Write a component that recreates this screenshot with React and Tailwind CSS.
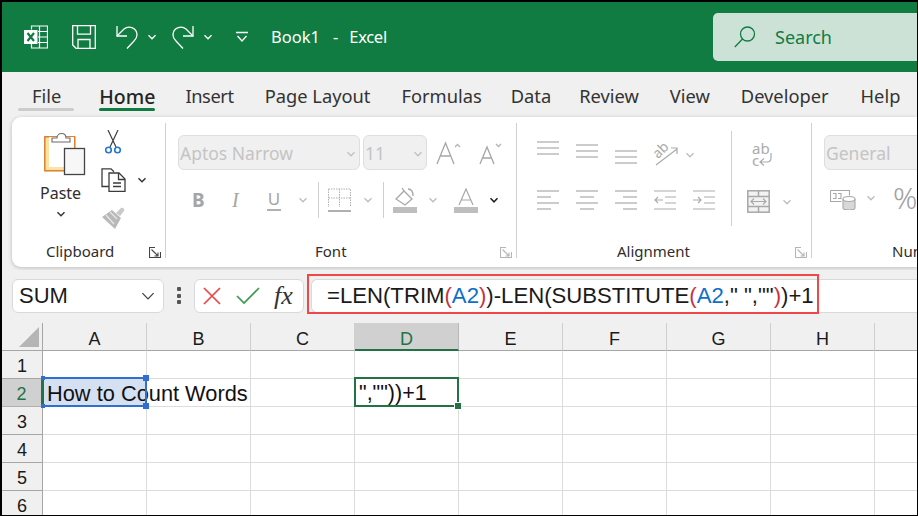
const UI = { fontFamily: '"Noto Sans", sans-serif' };

function Chev({ color = "#444", size = 10, sw = 1.3, className = "" }) {
  return (
    <svg width={size} height={size} viewBox="0 0 10 10" className={"shrink-0 " + className}>
      <path d="M1.5 3.2 5 6.8 8.5 3.2" fill="none" stroke={color} strokeWidth={sw} />
    </svg>
  );
}

function ExcelLogo() {
  return (
    <svg width="24" height="24" viewBox="0 0 24 24" fill="none">
      <path d="M7.5 4.5V1h16v22h-16v-4" stroke="#fff" strokeWidth="1.2" />
      <path d="M14 6.5h9.5M14 12h9.5M14 17.5h9.5M15.5 1v22" stroke="#fff" strokeWidth="1.2" />
      <rect x="0" y="5" width="13.5" height="14" fill="#fff" />
      <path d="M3.5 8 10 16M10 8l-6.500 8" stroke="#107c41" strokeWidth="2.200" />
    </svg>
  );
}
function SaveIcon() {
  return (
    <svg width="24" height="24" viewBox="0 0 24 24" fill="none" stroke="#fff" strokeWidth="1.300">
      <path d="M.7.7h22.600v22.600H4L.7 20z" />
      <path d="M5.500.7v8.500h13V.7M6 23.300V14.500h12v8.800" />
    </svg>
  );
}
function UndoIcon() {
  return (
    <svg width="23" height="24" viewBox="0 0 23 24" fill="none" stroke="#fff" strokeWidth="1.300">
      <path d="M1 1v10h10" />
      <path d="M1 11 8 4c5-4 13-1 13 6 0 3-1 4-3 6l-7 7.500" />
    </svg>
  );
}
function RedoIcon() {
  return (
    <svg width="23" height="24" viewBox="0 0 23 24" fill="none" stroke="#fff" strokeWidth="1.300">
      <path d="M22 1v10H12" />
      <path d="M22 11 15 4C10 0 2 3 2 10c0 3 1 4 3 6l7 7.500" />
    </svg>
  );
}
function CustomizeIcon() {
  return (
    <svg width="12" height="12" viewBox="0 0 12 12" fill="none" stroke="#fff" strokeWidth="1.300">
      <path d="M0 1.500h12M1.500 5 6 10 10.500 5" />
    </svg>
  );
}
function SearchIcon() {
  return (
    <svg width="22" height="22" viewBox="0 0 22 22" fill="none" stroke="#107c41" strokeWidth="1.300">
      <circle cx="13.500" cy="8" r="7" />
      <path d="M8.500 13 .8 21" />
    </svg>
  );
}
function TitleBar() {
  return (
    <div className="h-[70px] shrink-0 bg-[#107c41] flex items-center pl-[22px] text-white">
      <ExcelLogo />
      <div className="ml-[24px]"><SaveIcon /></div>
      <div className="ml-[20px]"><UndoIcon /></div>
      <Chev color="#fff" size={10} className="ml-[8px]" />
      <div className="ml-[14px]"><RedoIcon /></div>
      <Chev color="#fff" size={10} className="ml-[9px]" />
      <div className="ml-[23px]"><CustomizeIcon /></div>
      <div className="ml-[23px] text-[16.500px] whitespace-nowrap leading-none flex">
        <span>Book1</span>
        <span className="ml-[13px]">-</span>
        <span className="ml-[11px] tracking-[-0.3px]">Excel</span>
      </div>
      <div className="ml-auto w-[204px] h-[48px] bg-[#cde2d7] rounded-l-[5px] flex items-center pl-[21px] text-[#107c41] text-[18px]">
        <SearchIcon />
        <span className="ml-[19px]">Search</span>
      </div>
    </div>
  );
}

function Tab({ children, active, hover, className = "" }) {
  return (
    <div className={"relative leading-none whitespace-nowrap " + (active ? "font-medium text-[#262626] text-[19.500px] " : "text-[#333] text-[18.300px] ") + className}>
      {children}
      {active && <div className="absolute left-0 right-0 top-[21px] h-[3px] rounded bg-[#107c41]" />}
      {hover && <div className="absolute left-[-14px] right-[-13px] top-[21px] h-[3px] rounded bg-[#cccccc]" />}
    </div>
  );
}
function Tabs() {
  return (
    <div className="h-[45px] shrink-0 bg-[#f0f0f0] flex items-start pt-[15px] pl-[30px]">
      <Tab hover>File</Tab>
      <Tab active className="ml-[38px]">Home</Tab>
      <Tab className="ml-[30px] tracking-[-0.4px]">Insert</Tab>
      <Tab className="ml-[31px]">Page Layout</Tab>
      <Tab className="ml-[31px]">Formulas</Tab>
      <Tab className="ml-[29px]">Data</Tab>
      <Tab className="ml-[28px]">Review</Tab>
      <Tab className="ml-[31px]">View</Tab>
      <Tab className="ml-[31px]">Developer</Tab>
      <Tab className="ml-[32px]">Help</Tab>
    </div>
  );
}

function Launcher({ dim }) {
  const c = dim ? "#b5b5b5" : "#444";
  return (
    <svg width="12" height="11" viewBox="0 0 12 11" fill="none" stroke={c} strokeWidth="1.100">
      <path d="M11.500 5V10.500H.5V.5H6" />
      <path d="M2.500 2.500 9 9M9 5.500V9H5.500" />
    </svg>
  );
}
function GroupFooter({ label, left, launchLeft, dim }) {
  return (
    <div className="h-[20px] pt-[6px] flex items-center relative text-[15px] text-[#2e2e2e] leading-none">
      <span style={{ marginLeft: left }}>{label}</span>
      {launchLeft !== undefined && <span className="flex" style={{ position: "absolute", left: launchLeft, top: 9 }}><Launcher dim={dim} /></span>}
    </div>
  );
}

function PasteIcon() {
  return (
    <svg width="42" height="46" viewBox="0 0 42 46" fill="none">
      <rect x=".8" y="6.800" width="30" height="34" fill="#fbe3a4" stroke="#d8781f" strokeWidth="1.400" />
      <rect x="5" y="7" width="25" height="30" fill="#fff" />
      <path d="M8 12V8h5c0-6 9-6 9 0h4v4z" fill="#fff" stroke="#6b6b6b" strokeWidth="1.100" />
      <rect x="20.500" y="18.500" width="20" height="26" fill="#f7f7f7" stroke="#444" strokeWidth="1.300" />
    </svg>
  );
}
function ScissorsIcon() {
  return (
    <svg width="16" height="24" viewBox="0 0 16 24" fill="none">
      <path d="M3 0 11 17M13 0 5 17" stroke="#3f3f3f" strokeWidth="1.200" />
      <circle cx="3.500" cy="20" r="2.800" stroke="#1f78d1" strokeWidth="1.600" />
      <circle cx="12.500" cy="20" r="2.800" stroke="#1f78d1" strokeWidth="1.600" />
    </svg>
  );
}
function CopyIcon() {
  return (
    <svg width="25" height="24" viewBox="0 0 25 24" fill="none" stroke="#3c3c3c" strokeWidth="1.300">
      <path d="M8 18.500H1V.8h9l3 3" />
      <path d="M8 5h10l6 6v12.300H8z" fill="#fff" />
      <path d="M17.500 5v6.500H24M12 15h8M12 18.500h8" />
    </svg>
  );
}
function BrushIcon() {
  return (
    <svg width="25" height="23" viewBox="0 0 25 23">
      <path d="M1 10 11 3l9 8-6 11z" fill="#b9b9b9" />
      <path d="M5 8l8 9M9 5l7 7" stroke="#e6e6e6" strokeWidth="1.200" fill="none" />
      <path d="M15 6 20 1c2-1 4 1 3 3l-4 5z" fill="#c9c9c9" />
    </svg>
  );
}
function Clipboard() {
  return (
    <div className="w-[154px] shrink-0 border-r border-[#d0d0d0] h-[135px] flex flex-col">
      <div className="flex-1 flex pt-[7px]">
        <div className="w-[75px] pl-[32px] flex flex-col">
          <PasteIcon />
          <div className="mt-[7px] -ml-[4px] text-[16px] leading-[20px] text-[#2e2e2e]">Paste</div>
          <Chev color="#333" size={10} sw={1.400} className="mt-[6px] ml-[12px]" />
        </div>
        <div className="flex flex-col items-start pl-[14px]">
          <div className="ml-[4px]"><ScissorsIcon /></div>
          <div className="mt-[14px] flex items-center">
            <CopyIcon />
            <Chev color="#333" size={10} sw={1.400} className="ml-[11px]" />
          </div>
          <div className="mt-[15px]"><BrushIcon /></div>
        </div>
      </div>
      <GroupFooter label="Clipboard" left={34} launchLeft={137} />
    </div>
  );
}

function Combo({ w, label }) {
  return (
    <div className={"h-[35px] rounded-[6px] bg-[#f0f0f0] border border-[#dedede] flex items-center pl-[1px] pt-[2px] text-[17.500px] text-[#c4c4c4] leading-none overflow-hidden " + w}>
      <span>{label}</span>
      <Chev color="#c0c0c0" size={10} className="ml-auto mr-[3px]" />
    </div>
  );
}
function GrowA({ up }) {
  return (
    <svg width="26" height="26" viewBox="0 0 26 26" fill="none" stroke="#a6a6a6" strokeWidth="1.300">
      {up ? (
        <>
          <path d="M1 24 9.500 3 18 24M4.500 16h10" />
          <path d="M19 7l2.500-2.500L24 7" stroke="#b4b4b4" />
        </>
      ) : (
        <>
          <path d="M2 24 9 7l7 17M5 18h8" />
          <path d="M18 4l2.500 2.500L23 4" stroke="#b4b4b4" />
        </>
      )}
    </svg>
  );
}
function BordersIcon() {
  return (
    <svg width="23" height="24" viewBox="0 0 23 24" fill="none">
      <path d="M.5 1h22v18M.5 1v18M11.500 1v18M.5 10h22" stroke="#b0b0b0" strokeWidth="1" strokeDasharray="1.500 1" />
      <path d="M0 23h23" stroke="#a8a8a8" strokeWidth="1.800" />
    </svg>
  );
}
function FillIcon() {
  return (
    <svg width="24" height="25" viewBox="0 0 24 25" fill="none">
      <path d="M3 11 11 3l8 8-7 6z" stroke="#a8a8a8" strokeWidth="1.300" fill="#fff" />
      <path d="M11 3 9 0M15 1c4 0 5 3 5 7" stroke="#a8a8a8" strokeWidth="1.300" />
      <rect x="0" y="19" width="24" height="6" fill="#bebebe" />
    </svg>
  );
}
function FontColorIcon() {
  return (
    <svg width="24" height="25" viewBox="0 0 24 25" fill="none">
      <path d="M5 17 12 1l7 16M7.500 12h9" stroke="#a8a8a8" strokeWidth="1.200" />
      <rect x="0" y="19" width="24" height="6" fill="#bebebe" />
    </svg>
  );
}
function Font() {
  return (
    <div className="w-[351px] shrink-0 border-r border-[#d0d0d0] h-[135px] flex flex-col">
      <div className="flex-1 flex flex-col pl-[12px] pt-[12px]">
        <div className="flex items-center">
          <Combo w="w-[182px]" label="Aptos Narrow" />
          <div className="ml-[3px]"><Combo w="w-[64px]" label="11" /></div>
          <div className="ml-[9px]"><GrowA up /></div>
          <div className="ml-[16px]"><GrowA /></div>
        </div>
        <div className="flex items-center mt-[12px] h-[36px] text-[#a5a5a5]">
          <span className="w-[12px] ml-[14px] text-[19px] font-bold leading-none">B</span>
          <span className="ml-[28px] w-[8px] text-[20px] italic leading-none" style={{ fontFamily: '"Liberation Serif", serif' }}>I</span>
          <span className="ml-[27px] w-[14px] text-[17px] leading-none border-b-2 border-[#b0b0b0] text-center pb-[2px]">U</span>
          <Chev color="#bdbdbd" size={10} className="ml-[17px]" />
          <div className="w-px h-[36px] bg-[#cfcfcf] ml-[10px]" />
          <div className="ml-[9px]"><BordersIcon /></div>
          <Chev color="#bdbdbd" size={10} className="ml-[12px]" />
          <div className="w-px h-[36px] bg-[#cfcfcf] ml-[10px]" />
          <div className="ml-[9px]"><FillIcon /></div>
          <Chev color="#bdbdbd" size={10} className="ml-[11px]" />
          <div className="ml-[16px]"><FontColorIcon /></div>
          <Chev color="#222" size={10} sw={1.500} className="ml-[11px]" />
        </div>
      </div>
      <GroupFooter label="Font" left={149} launchLeft={334} dim />
    </div>
  );
}

function Lines({ align = "left", rows = 4 }) {
  const ys = rows === 3 ? [1, 7, 13] : [1, 7, 13, 19];
  const widths = [22, 14, 22, 14];
  const h = rows === 3 ? 14 : 20;
  return (
    <svg width="22" height={h} viewBox={`0 0 22 ${h}`} stroke="#ababab" strokeWidth="1.200">
      {ys.map((y, i) => {
        const w = rows === 3 ? 22 : widths[i];
        const x = align === "left" ? 0 : align === "right" ? 22 - w : (22 - w) / 2;
        return <line key={y} x1={x} x2={x + w} y1={y} y2={y} />;
      })}
    </svg>
  );
}
function Indent({ dir }) {
  return (
    <svg width="22" height="20" viewBox="0 0 22 20" fill="none" stroke="#ababab" strokeWidth="1.200">
      <path d="M0 1h22M0 19h22M11 7h11M11 13h11" />
      <path d={dir === "out" ? "M9 10H1M4 7l-3 3 3 3" : "M0 10h8M5 7l3 3-3 3"} />
    </svg>
  );
}
function OrientIcon() {
  return (
    <div className="relative w-[25px] h-[24px] text-[14px] leading-[14px] text-[#ababab]">
      <span className="absolute left-[-1px] top-[1px] -rotate-45">ab</span>
      <svg width="25" height="24" viewBox="0 0 25 24" fill="none" stroke="#ababab" strokeWidth="1.200" className="absolute left-0 top-0">
        <path d="M3 23 24 7M18 6h6v6" />
      </svg>
    </div>
  );
}
function WrapIcon() {
  return (
    <div className="relative w-[21px] h-[24px] text-[15px] leading-[12px] text-[#ababab]">
      <div>ab</div>
      <div>c</div>
      <svg width="21" height="24" viewBox="0 0 21 24" fill="none" stroke="#ababab" strokeWidth="1.200" className="absolute left-0 top-0">
        <path d="M19 11v5c0 3-2 4-4 4H9M12 16.500l-4 3.500 4 3.500" />
      </svg>
    </div>
  );
}
function MergeIcon() {
  return (
    <svg width="23" height="23" viewBox="0 0 23 23" fill="none" stroke="#a8a8a8" strokeWidth="1.500">
      <rect x=".8" y=".8" width="21.400" height="21.400" fill="#f2f2f2" />
      <path d="M.8 6.500h21.400M.8 16.500h21.400M11.500.8v5.700M11.500 16.500v5.700" />
      <path d="M4 11.500h15M7 8.500l-3 3 3 3M16 8.500l3 3-3 3" strokeWidth="1.100" />
    </svg>
  );
}
function Alignment() {
  return (
    <div className="w-[295px] shrink-0 border-r border-[#d0d0d0] h-[135px] flex flex-col">
      <div className="flex-1 flex pt-[8px]">
        <div className="w-[215px] h-[95px] border-r border-[#d0d0d0] pl-[20px] flex flex-col">
          <div className="h-[42px] flex items-start">
            <div className="mt-[10px]"><Lines rows={3} /></div>
            <div className="mt-[13px] ml-[17px]"><Lines rows={3} /></div>
            <div className="mt-[19px] ml-[17px]"><Lines rows={3} /></div>
            <div className="mt-[11px] ml-[16px]"><OrientIcon /></div>
            <Chev color="#bdbdbd" size={10} className="ml-[7px] mt-[19px]" />
          </div>
          <div className="mt-[17px] flex gap-[17px]">
            <Lines align="left" />
            <Lines align="center" />
            <Lines align="right" />
            <Indent dir="out" />
            <Indent dir="in" />
          </div>
        </div>
        <div className="pl-[15px] flex flex-col">
          <div className="ml-[5px] mt-[11px]"><WrapIcon /></div>
          <div className="mt-[24px] flex items-center">
            <MergeIcon />
            <Chev color="#bdbdbd" size={10} className="ml-[12px]" />
          </div>
        </div>
      </div>
      <GroupFooter label="Alignment" left={100} launchLeft={278} dim />
    </div>
  );
}
function AccountIcon() {
  return (
    <svg width="26" height="24" viewBox="0 0 26 24" fill="none" stroke="#a8a8a8" strokeWidth="1.100">
      <path d="M.5 4.500h19v5M.5 4.500v11h11" />
      <path d="M3 7.500H6v5H3M8 7.500h3v5H8" />
      <path d="M13 13v9c0 1 2 2 6 2s6-1 6-2v-9" fill="#d8d8d8" />
      <ellipse cx="19" cy="13" rx="6" ry="2.500" fill="#fff" />
    </svg>
  );
}
function NumberGroup() {
  return (
    <div className="flex-1 min-w-0 h-[135px] flex flex-col overflow-hidden">
      <div className="flex-1 flex flex-col pl-[12px] pt-[12px]">
        <div className="w-[110px] h-[35px] rounded-[6px] bg-[#f0f0f0] border border-[#dedede] flex items-center pl-[1px] pt-[2px] text-[17.500px] text-[#c4c4c4] leading-none">General</div>
        <div className="flex items-center mt-[13px]">
          <div className="ml-[6px]"><AccountIcon /></div>
          <Chev color="#bdbdbd" size={10} className="ml-[10px]" />
          <span className="ml-[17px] text-[30px] leading-none text-[#a0a0a0] font-light">%</span>
        </div>
      </div>
      <div className="h-[20px] pt-[6px] flex items-center text-[15px] text-[#2e2e2e] leading-none pl-[80px] whitespace-nowrap">Number</div>
    </div>
  );
}
function Ribbon() {
  return (
    <div className="h-[153px] shrink-0 bg-[#f0f0f0] pl-[10px]">
      <div className="h-[150px] bg-white rounded-l-[9px] shadow-[0_1px_4px_rgba(0,0,0,0.22)] flex pt-[6px]">
        <Clipboard />
        <Font />
        <Alignment />
        <NumberGroup />
      </div>
    </div>
  );
}

const A2 = "text-[#0f6fc6]";
const P = "text-[#c8323c]";
function FormulaBar() {
  return (
    <div className="h-[53px] shrink-0 bg-[#f0f0f0] relative pl-[10px] pt-[9px] flex items-start">
      <div className="w-[152px] h-[34px] bg-white rounded-[6px] border border-[#d9d9d9] flex items-center pl-[6px] text-[22px] text-[#1a1a1a] leading-none" style={{ fontFamily: '"Liberation Sans", sans-serif' }}>
        SUM
        <Chev color="#444" size={16} sw={.8} className="ml-auto mr-[7px]" />
      </div>
      <div className="w-[4px] h-[17px] ml-[13px] mt-[8px] flex flex-col justify-between items-center">
        <i className="w-[4px] h-[4px] bg-[#555] rounded-[1px]" />
        <i className="w-[4px] h-[4px] bg-[#555] rounded-[1px]" />
        <i className="w-[4px] h-[4px] bg-[#555] rounded-[1px]" />
      </div>
      <div className="ml-[13px] w-[110px] h-[34px] bg-white rounded-[6px] border border-[#d9d9d9] flex items-center pl-[8px]">
        <svg width="18" height="18" viewBox="0 0 18 18" fill="none" stroke="#ee4444" strokeWidth="1.700"><path d="M1 1l16 16M17 1 1 17" /></svg>
        <svg width="24" height="18" viewBox="0 0 24 18" fill="none" stroke="#3c9c50" strokeWidth="1.700" className="ml-[15px]"><path d="M1 9l7 7L23 1" /></svg>
        <span className="ml-[14px] text-[26px] italic leading-none text-[#333]" style={{ fontFamily: '"Liberation Serif", serif' }}>fx</span>
      </div>
      <div className="ml-[7px] flex-1 h-[34px] bg-white rounded-l-[6px] border border-r-0 border-[#d9d9d9] flex items-center pl-[15px] text-[22.150px] text-[#1a1a1a] whitespace-nowrap leading-none" style={{ fontFamily: '"Liberation Sans", sans-serif' }}>
        <span>=LEN(TRIM<span className={P}>(</span><span className={A2}>A2</span><span className={P}>)</span>)-LEN(SUBSTITUTE<span className={P}>(</span><span className={A2}>A2</span>," ",""<span className={P}>)</span>)+1</span>
      </div>
      <div className="absolute left-[305px] top-[4px] w-[512px] h-[40px] border-2 border-[#f04848]" />
    </div>
  );
}

const COLS = ["A", "B", "C", "D", "E", "F", "G", "H", ""];
const ROWS = [1, 2, 3, 4, 5, 6];
const CELL = { fontFamily: '"Liberation Sans", sans-serif' };

function Handle({ className, color }) {
  return <i className={"absolute w-[6px] h-[6px] " + color + " " + className} />;
}
function Sheet() {
  return (
    <div className="flex-1 min-h-0 bg-white overflow-hidden" style={CELL}>
      <div className="grid grid-cols-[41px_repeat(9,104px)] grid-rows-[28px_repeat(6,28px)] bg-white">
        <div className="bg-[#f0f0f0] border-r border-b border-[#a6a6a6] relative flex items-end justify-end pr-[3px] pb-[3px]">
          <svg width="20" height="20" viewBox="0 0 20 20"><path d="M20 0v20H0z" fill="#b5b5b5" /></svg>
        </div>
        {COLS.map((c) => (
          <div key={c || "I"} className={"border-r flex items-center justify-center text-[18px] leading-none pt-[5px] " + (c === "D" ? "bg-[#d0d0d0] border-[#b8b8b8] border-b-2 border-b-[#217346] text-[#217346]" : "bg-[#f0f0f0] border-b border-b-[#a6a6a6] border-r-[#cfcfcf] text-[#1a1a1a]")}>
            {c}
          </div>
        ))}
        {ROWS.map((r) => (
          <div key={r} className="contents">
            <div className={"border-r border-b flex items-center justify-center text-[18px] leading-none pt-[3px] " + (r === 2 ? "bg-[#d0d0d0] border-r-[#217346] border-r-2 border-b-[#b0b0b0] text-[#217346]" : "bg-[#f0f0f0] border-r-[#a6a6a6] border-b-[#a6a6a6] text-[#1a1a1a]")}>{r}</div>
            {COLS.map((c) => (
              <div key={c + r} className="relative border-r border-b border-[#dcdcdc] min-w-0">
                {c === "A" && r === 2 && (
                  <>
                    <div className="absolute left-[1px] top-0 w-[101px] h-[26px] bg-[#d6e0f3]" />
                    <div className="absolute left-[4px] top-[1px] h-[27px] flex items-center text-[21.800px] leading-none text-[#111] whitespace-nowrap z-10">How to Count Words</div>
                    <div className="absolute left-[-1px] top-[-2px] w-[105px] h-[30px] border-2 border-[#2f6fce] z-20 border-l-[#217346]" />
                    <Handle color="bg-[#2f6fce]" className="left-[100px] top-[-4px] z-30" />
                    <Handle color="bg-[#2f6fce]" className="left-[100px] top-[24px] z-30" />
                    <Handle color="bg-[#2f6fce] !w-[4px] !h-[4px]" className="left-[-2px] top-[-3px] z-30" />
                    <Handle color="bg-[#2f6fce] !w-[4px] !h-[4px]" className="left-[-2px] top-[25px] z-30" />
                  </>
                )}
                {c === "D" && r === 2 && (
                  <>
                    <div className="absolute left-[4px] top-[1px] h-[27px] flex items-center text-[21.500px] leading-none text-[#111] whitespace-nowrap z-10">",""))+1</div>
                    <div className="absolute left-[-1px] top-[-2px] w-[105px] h-[30px] border-2 border-[#217346] z-20" />
                    <Handle color="bg-[#217346] outline outline-1 outline-white" className="left-[100px] top-[24px] z-30" />
                  </>
                )}
              </div>
            ))}
          </div>
        ))}
      </div>
    </div>
  );
}

export default function App() {
  return (
    <div className="w-[918px] h-[516px] bg-black pt-[2px] pl-[2px] pr-px pb-px overflow-hidden">
      <div className="h-full flex flex-col overflow-hidden" style={UI}>
        <TitleBar />
        <Tabs />
        <Ribbon />
        <FormulaBar />
        <Sheet />
      </div>
    </div>
  );
}
